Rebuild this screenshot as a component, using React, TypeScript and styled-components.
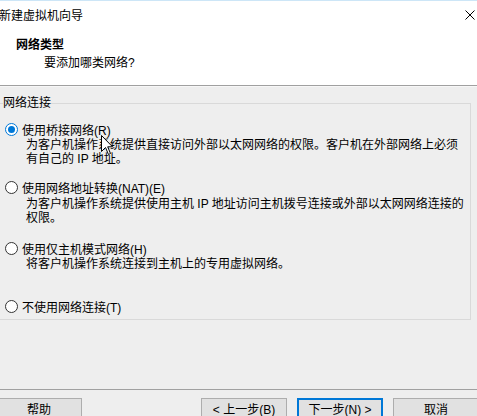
import React from "react";
import styled, { createGlobalStyle } from "styled-components";

const Global = createGlobalStyle`
  html, body { margin: 0; padding: 0; background: #eeeeee; overflow: hidden; }
  body { font-family: "Liberation Sans", "Noto Sans CJK SC", sans-serif; font-size: 12px; color: #000; }
`;

const Window = styled.div`
  position: relative;
  width: 477px;
  height: 416px;
  overflow: hidden;
  background: #eeeeee;
`;

const TitleBar = styled.div`
  height: 29px;
  border-top: 1px solid #cde6f7;
  background: #fff;
  display: flex;
  align-items: center;
  justify-content: space-between;
`;

const TitleText = styled.span`
  margin-left: -1px;
  line-height: 16px;
`;

const CloseIcon = styled.svg`
  width: 10px;
  height: 10px;
  margin-right: 2px;
  margin-top: -2px;
`;

const Header = styled.div`
  height: 56px;
  background: #fff;
  padding-top: 7px;
  box-sizing: border-box;
  border-bottom: 1px solid #a0a0a0;
`;

const HeaderTitle = styled.div`
  font-weight: 700;
  line-height: 16px;
  margin-left: 16px;
`;

const HeaderSub = styled.div`
  line-height: 16px;
  margin-top: 2px;
  margin-left: 44px;
`;

const Body = styled.div`
  height: 303px;
  box-sizing: border-box;
  padding-top: 9px;
  border-top: 1px solid #f7f7f7;
`;

const GroupBox = styled.fieldset`
  margin: 0 0 0 -4px;
  width: 475px;
  box-sizing: border-box;
  border: 1px solid #d9d9d9;
  padding: 0 0 5px 6px;
`;

const Legend = styled.legend`
  padding: 0;
  line-height: 14px;
`;

const Option = styled.div<{ $top: number }>`
  margin-top: ${(p) => p.$top}px;
  display: flex;
  flex-direction: column;
`;

const RadioRow = styled.div`
  display: flex;
  align-items: center;
  height: 16px;
  white-space: nowrap;
`;

const Radio = styled.span<{ $checked?: boolean }>`
  width: 13px;
  height: 13px;
  box-sizing: border-box;
  border-radius: 50%;
  margin-left: 2px;
  margin-right: 4px;
  border: 1px solid ${(p) => (p.$checked ? "#0078d7" : "#333")};
  background: #fff;
  display: flex;
  align-items: center;
  justify-content: center;
  flex-shrink: 0;
  &::after {
    content: "";
    display: ${(p) => (p.$checked ? "block" : "none")};
    width: 7px;
    height: 7px;
    border-radius: 50%;
    background: #0078d7;
  }
`;

const Desc = styled.div<{ $gap: number }>`
  margin-left: 23px;
  margin-top: ${(p) => p.$gap}px;
  line-height: 14px;
  white-space: nowrap;
`;

const ButtonBar = styled.div`
  border-top: 1px solid #a0a0a0;
  display: flex;
  justify-content: space-between;
  padding-top: 8px;
  margin: 0 -2px 0 -4px;
`;

const Group = styled.div`
  display: flex;
  gap: 10px;
`;

const Button = styled.button<{ $default?: boolean }>`
  width: 86px;
  height: 23px;
  box-sizing: border-box;
  background: #e1e1e1;
  border: ${(p) => (p.$default ? "2px solid #0078d7" : "1px solid #adadad")};
  font-family: inherit;
  font-size: 12px;
  color: #000;
  padding: 0;
  line-height: 16px;
  flex-shrink: 0;
`;

const Cursor = styled.svg`
  position: absolute;
  left: 101px;
  top: 135px;
  width: 13px;
  height: 21px;
`;

const options = [
  {
    label: "使用桥接网络(R)",
    checked: true,
    top: 11,
    gap: 1,
    lines: [
      "为客户机操作系统提供直接访问外部以太网网络的权限。客户机在外部网络上必须",
      "有自己的 IP 地址。",
    ],
  },
  {
    label: "使用网络地址转换(NAT)(E)",
    top: 13,
    gap: 2,
    lines: [
      "为客户机操作系统提供使用主机 IP 地址访问主机拨号连接或外部以太网网络连接的",
      "权限。",
    ],
  },
  {
    label: "使用仅主机模式网络(H)",
    top: 15,
    gap: 1,
    lines: ["将客户机操作系统连接到主机上的专用虚拟网络。"],
  },
  {
    label: "不使用网络连接(T)",
    top: 27,
    gap: 0,
    lines: [] as string[],
  },
];

export default function App() {
  return (
    <Window>
      <Global />
      <TitleBar>
        <TitleText>新建虚拟机向导</TitleText>
        <CloseIcon viewBox="0 0 10 10">
          <path d="M0.5 0.5 L9.5 9.5 M9.5 0.5 L0.5 9.5" stroke="#000" strokeWidth="1" fill="none" />
        </CloseIcon>
      </TitleBar>
      <Header>
        <HeaderTitle>网络类型</HeaderTitle>
        <HeaderSub>要添加哪类网络?</HeaderSub>
      </Header>
      <Body>
        <GroupBox>
          <Legend>网络连接</Legend>
          {options.map((o) => (
            <Option key={o.label} $top={o.top}>
              <RadioRow>
                <Radio $checked={o.checked} />
                {o.label}
              </RadioRow>
              {o.lines.length > 0 && (
                <Desc $gap={o.gap}>
                  {o.lines.map((l) => (
                    <div key={l}>{l}</div>
                  ))}
                </Desc>
              )}
            </Option>
          ))}
        </GroupBox>
      </Body>
      <ButtonBar>
        <Button>帮助</Button>
        <Group>
          <Button>&lt; 上一步(B)</Button>
          <Button $default>下一步(N) &gt;</Button>
          <Button>取消</Button>
        </Group>
      </ButtonBar>
      <Cursor viewBox="0 0 13 21">
        <path d="M0.5 0.5 L0.5 16.5 L4.5 12.5 L7.5 19.5 L9.5 18.5 L6.7 11.8 L11.5 11.8 Z" fill="#fff" stroke="#000" strokeWidth="1" />
      </Cursor>
    </Window>
  );
}
